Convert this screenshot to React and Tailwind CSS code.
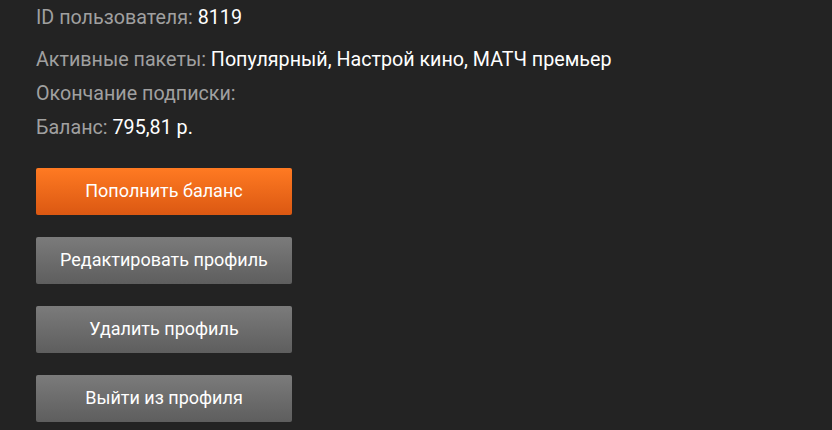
export default function App() {
  const rows = [
    { label: "Активные пакеты:", value: "Популярный, Настрой кино, МАТЧ премьер" },
    { label: "Окончание подписки:", value: "" },
    { label: "Баланс:", value: "795,81 р." },
  ];

  const buttons = ["Редактировать профиль", "Удалить профиль", "Выйти из профиля"];

  return (
    <div className="min-h-screen w-full bg-[#232323] pl-9 font-['Roboto',sans-serif]">
      <p className="pt-[1px] text-[19.7px] leading-[34px] text-[#a0a0a0]">
        ID пользователя: <span className="text-white">8119</span>
      </p>

      <div className="mt-[8px]">
        {rows.map((row) => (
          <p key={row.label} className="text-[19.7px] leading-[34px] text-[#a0a0a0]">
            {row.label} {row.value && <span className="text-white">{row.value}</span>}
          </p>
        ))}
      </div>

      <div className="mt-[23px] flex flex-col gap-[22px]">
        <button className="h-[47px] w-[256px] rounded-[2px] bg-gradient-to-b from-[#ff7a22] to-[#db5812] pb-[3px] text-[18px] text-white">
          Пополнить баланс
        </button>
        {buttons.map((b) => (
          <button
            key={b}
            className="h-[47px] w-[256px] rounded-[2px] bg-gradient-to-b from-[#7b7b7b] to-[#5e5e5e] pb-[3px] text-[18px] text-white"
          >
            {b}
          </button>
        ))}
      </div>
    </div>
  );
}
